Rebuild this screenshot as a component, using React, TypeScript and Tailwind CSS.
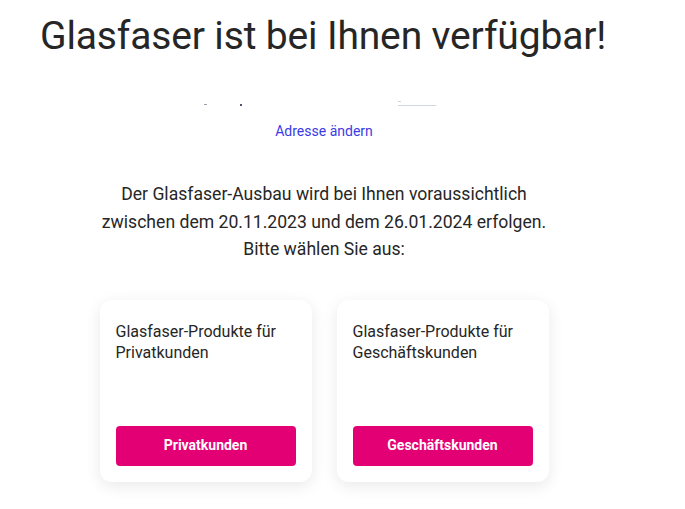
export default function App() {
  return (
    <div className="min-h-[509px] w-[685px] bg-white text-[#262626]" style={{ fontFamily: "Roboto, 'Noto Sans', sans-serif" }}>
      <div className="flex w-[648px] flex-col items-center">
        <h1 className="mt-[12px] self-start pl-10 text-[39px] leading-[48px] tracking-[-0.15px]">
          Glasfaser ist bei Ihnen verfügbar!
        </h1>

        {/* remnants of the redacted address line */}
        <div className="mt-[38px] flex h-[8px] w-[240px] items-end">
          <span className="mb-[1px] h-[1px] w-[3px] bg-gray-400" />
          <span className="ml-[33px] h-[2px] w-[2px] bg-gray-600" />
          <span className="ml-[156px] flex flex-col gap-[3px]">
            <span className="h-[1px] w-[3px] bg-gray-300" />
            <span className="h-[1px] w-[38px] bg-gray-300" />
          </span>
        </div>

        <a href="#" className="mt-[15px] text-[14px] leading-5 text-[#3b3be6]">
          Adresse ändern
        </a>

        <p className="mt-[40px] text-center text-[17.6px] leading-[27.5px]">
          Der Glasfaser-Ausbau wird bei Ihnen voraussichtlich
          <br />
          zwischen dem 20.11.2023 und dem 26.01.2024 erfolgen.
          <br />
          Bitte wählen Sie aus:
        </p>

        <div className="mt-[36px] flex gap-[25px]">
          <Card text={["Glasfaser-Produkte für", "Privatkunden"]} label="Privatkunden" />
          <Card text={["Glasfaser-Produkte für", "Geschäftskunden"]} label="Geschäftskunden" />
        </div>
      </div>
    </div>
  );
}

function Card({ text, label }: { text: string[]; label: string }) {
  return (
    <div className="flex h-[182px] w-[212px] flex-col justify-between rounded-[12px] bg-white px-4 pb-4 pt-[21px] shadow-[0_4px_16px_rgba(0,0,0,0.09)]">
      <p className="text-[16px] leading-[21px]">
        {text[0]}
        <br />
        {text[1]}
      </p>
      <button type="button" className="h-10 w-full rounded-[4px] bg-[#e20074] text-[14px] font-bold text-white">
        {label}
      </button>
    </div>
  );
}
